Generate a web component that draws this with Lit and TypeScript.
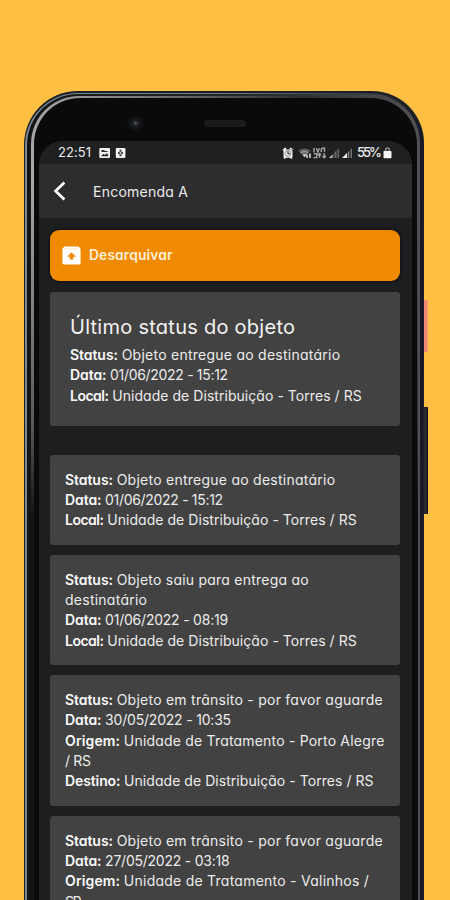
import { LitElement, html, css, svg } from "lit";
import { customElement, property } from "lit/decorators.js";

/** Text run stretched or tightened to a fixed advance width. */
@customElement("fit-text")
class FitText extends LitElement {
  @property() text = "";
  @property({ type: Number }) w = 0;
  @property({ type: Number, state: true }) spacing = 0;
  static styles = css`
    :host { display: inline-block; white-space: pre; }
    .run { display: inline-block; }
  `;
  firstUpdated() {
    const run = this.renderRoot.querySelector(".run") as HTMLElement;
    const natural = run.getBoundingClientRect().width;
    const n = Array.from(this.text).length;
    if (this.w && n > 1) this.spacing = (this.w - natural) / (n - 1);
  }
  render() {
    return html`<span class="run" style="letter-spacing:${this.spacing}px">${this.text}</span>`;
  }
}

type Line = { label?: string; lw?: number; value: string; vw: number };

const status = (value: string, vw: number): Line => ({ label: "Status:", lw: 48, value, vw });
const date = (value: string, vw: number): Line => ({ label: "Data:", lw: 36.5, value, vw });
const local: Line = { label: "Local:", lw: 39, value: "Unidade de Distribuição - Torres / RS", vw: 249.5 };

const latest: Line[] = [
  status("Objeto entregue ao destinatário", 218.5),
  date("01/06/2022 - 15:12", 118),
  local,
];

const events: Line[][] = [
  latest,
  [
    status("Objeto saiu para entrega ao", 192),
    { value: "destinatário", vw: 82 },
    date("01/06/2022 - 08:19", 123),
    local,
  ],
  [
    status("Objeto em trânsito - por favor aguarde", 266),
    date("30/05/2022 - 10:35", 126),
    { label: "Origem:", lw: 55, value: "Unidade de Tratamento - Porto Alegre", vw: 260.5 },
    { value: "/ RS", vw: 26 },
    { label: "Destino:", lw: 55.5, value: "Unidade de Distribuição - Torres / RS", vw: 249.5 },
  ],
  [
    status("Objeto em trânsito - por favor aguarde", 266),
    date("27/05/2022 - 03:18", 124.5),
    { label: "Origem:", lw: 55, value: "Unidade de Tratamento - Valinhos /", vw: 245 },
    { value: "SP", vw: 16.5 },
  ],
];

@customElement("app-root")
class AppRoot extends LitElement {
  static styles = css`
    :host {
      display: block; position: relative; width: 450px; height: 900px; overflow: hidden;
      background: #ffbf43; color: #ececec;
      font-family: Inter, "Open Sans", sans-serif;
      font-feature-settings: "cv11" 1, "calt" 0;
    }
    * { box-sizing: border-box; }
    .side { position: absolute; left: 422px; width: 6px; }
    .power { top: 300px; height: 52px; background: #f08a72; border-right: 1px solid #f8a070; }
    .volume { top: 407px; height: 107px; background: #29282d; border-right: 1px solid #120b22; }
    .phone {
      position: relative; width: 400px; height: 900px; margin: 0 0 0 24px;
      top: 91px; border-radius: 54px 52px 0 0; background: #1a2027; padding: 1.5px 1.5px 0 1px;
    }
    .rim {
      height: 100%; border-radius: 53px 51px 0 0; padding: 1.5px 3px 0 2px;
      background: linear-gradient(90deg, #7d8995 0, #77797b 50%, #1c1c24 97%, #17172a 100%);
    }
    .rim2 {
      height: 100%; border-radius: 51px 49px 0 0; padding: 1.5px 1.5px 0 3.5px;
      background: linear-gradient(90deg, #131416 0, #26282a 60%, #505054 100%);
    }
    .rim3 {
      height: 100%; border-radius: 48px 47px 0 0; padding: 2.5px 1px 0 3px;
      background:
        linear-gradient(180deg, #0000 0, #0000 90px, #0a0a0a80 330px, #0b0b0bf0 420px),
        linear-gradient(90deg, #a8a9a7 0, #5c5e60 45%, #2e2e30 70%, #545458 100%);
    }
    .glass {
      height: 100%; border-radius: 46px 46px 0 0; background: #0a0a0b; overflow: hidden;
      display: flex; flex-direction: column; padding: 0 5px 0 5.5px;
    }
    .bezel { height: 43px; flex: none; position: relative; }
    .camera {
      position: absolute; left: 88px; top: 17px; width: 17px; height: 17px; border-radius: 50%;
      background: radial-gradient(circle at 50% 48%, #50555c 0 1px, #1d1f24 2px 4px, #111214 5px 7px, #0c0c0d 8px);
    }
    .speaker { position: absolute; left: 165px; top: 22px; width: 42px; height: 7px; border-radius: 4px; background: #1c1b1b; }
    .screen { flex: 1; border-radius: 24px 24px 0 0; background: #1c1e1f; overflow: hidden; }
    .bar { height: 23px; background: #1f2021; display: flex; align-items: center; padding: 0 20px 0 19px; }
    .time { font-size: 13px; line-height: 23px; margin-right: 8px; width: 33px; }
    .bar svg { display: block; flex: none; }
    .spacer { flex: 1; }
    .pct { font-size: 13px; font-weight: 500; line-height: 23px; margin-left: 4px; width: 26px; }
    .appbar { height: 54px; background: #2d2d2f; display: flex; align-items: center; padding-left: 14px; font-size: 14px; }
    .appbar svg { margin-right: 26px; flex: none; }
    .body { padding: 11.5px 12px 0 11px; display: flex; flex-direction: column; }
    .button {
      height: 51px; border-radius: 9px; background: #f08a00; display: flex; align-items: center;
      padding-left: 12px; gap: 8px; font-size: 13.8px; font-weight: 600; color: #ffefd8;
      box-shadow: 0 0 2px 1px #101216; margin-bottom: 11.5px;
    }
    .card { background: #424242; border-radius: 3px; padding: 14.5px 15px; margin-bottom: 10px; }
    .last { height: 134px; padding: 23px 20px 0; margin-bottom: 29px; }
    .title { font-size: 20px; line-height: 24px; margin-bottom: 6px; color: #f2f2f2; }
    .line { display: flex; gap: 3.7px; height: 20.35px; line-height: 20.35px; font-size: 14px; }
    .label { font-weight: 600; color: #fafafa; }
  `;

  line(l: Line) {
    return html`<div class="line">
      ${l.label ? html`<fit-text class="label" .text=${l.label} .w=${l.lw ?? 0}></fit-text>` : ""}
      <fit-text .text=${l.value} .w=${l.vw}></fit-text>
    </div>`;
  }

  statusIcons() {
    return svg`
      <path d="M.5 2.800 3.200.500l1.300 1.300L1.800 4.100zM11.500 2.800 8.800.500 7.500 1.800l2.700 2.300zM1.500 2.500h9v8H9.600l.900 1.200H8.800l-.8-1H4l-.8 1H1.500l.9-1.200h-.9z" fill="#f2f2f2"/>
      <path d="M6 4.200v2.500h2" fill="none" stroke="#222" stroke-width="1.100"/>
      <circle cx="6" cy="6.500" r="2.900" fill="none" stroke="#555" stroke-width=".6"/>
      <path d="M16.500 3.600Q22.500-.6 28.500 3.600L22.500 10.500z" fill="#5f5f5f"/>
      <path d="M18.500 6q4-2.600 7.500 0" fill="none" stroke="#a2a2a2" stroke-width="1.200"/>
      <path d="M20.500 7.500q2-1 4 0L22.500 10.200z" fill="#d0d0d0"/>
      <path d="M25 7.500v3.500M28 6.500v4.500" stroke="#d8d8d8" stroke-width="1.600"/>
      <g fill="none" stroke="#a8a8a8" stroke-width="1.400">
        <path d="M32 1v4.500M34.300 1.200l1.500 3.800 1.600-3.800M39.300 1.200v4M40 1.300h2.500v3.500M32 6.800h2.800v3.800H31.500M37.500 6.500v4.300M36 8.300l1.500-1.800L39 8.300M42.200 6v4.800M40.500 9l1.700 1.800L43.800 9"/>
      </g>
      <path d="M47 11h10V1z" fill="#444"/><path d="M47 11h3.500V7.500z" fill="#bbb"/><path d="M53.500 11V4.500M56.500 11V2" stroke="#686868" stroke-width="1"/>
      <path d="M60 11h10V1z" fill="#444"/><path d="M60 11h5V6z" fill="#e8e8e8"/><path d="M66.500 11V4.500M69.500 11V2" stroke="#777" stroke-width="1"/>
    `;
  }

  render() {
    return html`
      <div class="side power"></div>
      <div class="side volume"></div>
      <div class="phone"><div class="rim"><div class="rim2"><div class="rim3"><div class="glass">
        <div class="bezel"><div class="camera"></div><div class="speaker"></div></div>
        <div class="screen">
          <div class="bar">
            <fit-text class="time" .text=${"22:51"} .w=${33}></fit-text>
            <svg width="28" height="12" viewBox="0 0 28 12">
              <rect x=".3" y="1" width="10.700" height="10" rx="1" fill="#f2f2f2"/>
              <path d="M2 9.300 4.500 6.800 6 8l2-2 1.500 3.300zM2.500 3h3v1h3v1h-6z" fill="#2b2b2b"/>
              <rect x="16.800" y="1" width="9.600" height="10" rx="1.200" fill="#f2f2f2"/>
              <path d="M21.500 2.800v6.400M19 6h5" stroke="#3a3a3a" stroke-width="2"/>
              <path d="M21.500 4.600v2.800M20.100 6h2.800" stroke="#ddd" stroke-width=".7"/>
            </svg>
            <span class="spacer"></span>
            <svg width="71" height="12" viewBox="0 0 71 12">${this.statusIcons()}</svg>
            <fit-text class="pct" .text=${"55%"} .w=${25}></fit-text>
            <svg width="9" height="12" viewBox="0 0 9 12">
              <path d="M2.700 4V2.500q0-1.500 1.800-1.500t1.800 1.500V4" fill="none" stroke="#8c8c8c" stroke-width="1.500"/>
              <rect x=".5" y="4" width="8" height="7.200" rx=".8" fill="#f5f5f5"/>
            </svg>
          </div>
          <div class="appbar">
            <svg width="14" height="22" viewBox="0 0 14 22">
              <path d="M11.400 2.500 2.600 11l8.800 8.500" fill="none" stroke="#fff" stroke-width="2.700"/>
            </svg>
            <fit-text .text=${"Encomenda A"} .w=${95}></fit-text>
          </div>
          <div class="body">
            <div class="button">
              <svg width="19" height="19" viewBox="0 0 19 19">
                <path d="M2.200.6h14.600L18.600 3v13.800q0 1.600-1.600 1.600H2q-1.600 0-1.600-1.600V3z" fill="#fff"/>
                <path d="M2.300 2.900h14.400" stroke="#ffe2b8" stroke-width=".8"/>
                <path d="M9.500 6.200 14 10.800h-2.700v2.700H7.700v-2.700H5z" fill="#f08a00"/>
              </svg>
              <fit-text .text=${"Desarquivar"} .w=${83.5}></fit-text>
            </div>
            <div class="card last">
              <fit-text class="title" .text=${"Último status do objeto"} .w=${225}></fit-text>
              ${latest.map((l) => this.line(l))}
            </div>
            ${events.map((e) => html`<div class="card">${e.map((l) => this.line(l))}</div>`)}
          </div>
        </div>
      </div></div></div></div></div>
    `;
  }
}
